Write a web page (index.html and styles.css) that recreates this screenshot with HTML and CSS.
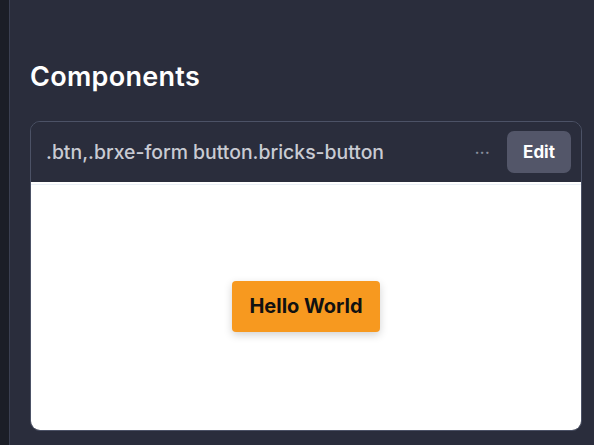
FILE: index.html
```html
<!DOCTYPE html>
<html>
<head>
<meta charset="utf-8">
<link rel="stylesheet" href="styles.css">
</head>
<body>
<div class="app">
  <div class="rail"></div>
  <main class="main">
    <h1 class="title">Components</h1>
    <section class="card">
      <header class="card-head">
        <span class="selector">.btn,.brxe-form button.bricks-button</span>
        <span class="more">···</span>
        <button class="edit">Edit</button>
      </header>
      <div class="preview">
        <button class="hello">Hello World</button>
      </div>
    </section>
  </main>
</div>
</body>
</html>
```
FILE: styles.css
```css
* { box-sizing: border-box; }
html, body { margin: 0; height: 100%; }
body {
  background: #2a2d3c;
  font-family: Inter, "Noto Sans", sans-serif;
  overflow: hidden;
}
.app { display: flex; height: 445px; }
.rail {
  width: 10px;
  flex: none;
  background: #1b1e27;
  border-right: 1px solid #3b4052;
}
.main {
  flex: 1;
  padding: 0 12px 0 20px;
  display: flex;
  flex-direction: column;
}
.title {
  margin: 58px 0 0 0;
  font-size: 27px;
  line-height: 38px;
  font-weight: 600;
  letter-spacing: 0.3px;
  color: #ffffff;
}
.card {
  margin-top: 25px;
  height: 310px;
  border: 1px solid #4c5266;
  border-radius: 10px;
  overflow: hidden;
  display: flex;
  flex-direction: column;
}
.card-head {
  height: 60px;
  flex: none;
  display: flex;
  align-items: center;
  padding: 0 10px 0 15px;
  background: #2a2d3c;
}
.selector {
  flex: 1;
  font-size: 19.4px;
  font-weight: 500;
  color: #c9cbd3;
}
.more {
  color: #8a8f9e;
  font-size: 18px;
  margin-right: 17px;
}
.edit {
  width: 64px;
  height: 42px;
  border: none;
  border-radius: 7px;
  background: #535669;
  color: #ffffff;
  font-family: Inter, "Noto Sans", sans-serif;
  font-size: 17px;
  font-weight: 700;
}
.preview {
  flex: 1;
  background: #ffffff;
  box-shadow: inset 0 2px 0 #ffffff, inset 0 3px 0 #eaf0f7;
  display: flex;
  align-items: center;
  justify-content: center;
}
.hello {
  width: 148px;
  height: 51px;
  border: none;
  border-radius: 4px;
  background: #f7991f;
  color: #111111;
  font-family: Inter, "Noto Sans", sans-serif;
  font-size: 20px;
  font-weight: 700;
  box-shadow: 0 3px 8px rgba(0,0,0,0.18);
}
```
